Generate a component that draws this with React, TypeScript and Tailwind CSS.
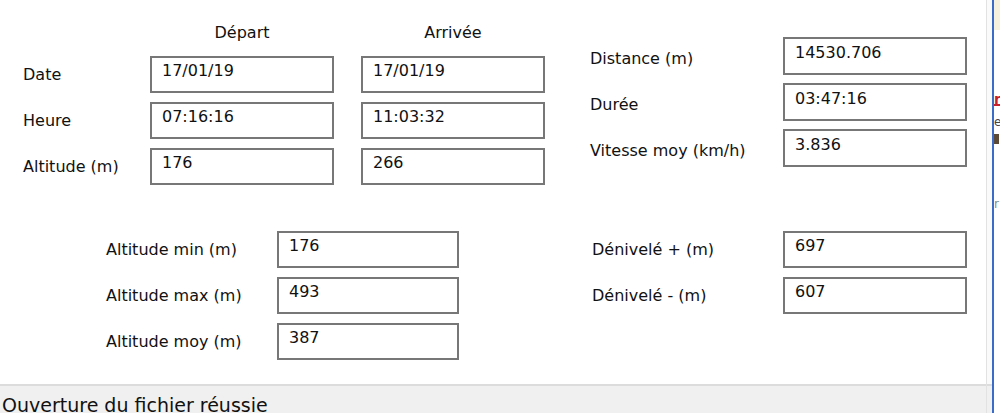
const font = { fontFamily: '"DejaVu Sans", Tahoma, Verdana, sans-serif' };

function Field({ value, w = "w-[184px]", h = "h-[37px]" }: { value: string; w?: string; h?: string }) {
  return (
    <div
      className={`${w} ${h} shrink-0 border-2 border-[#777] bg-white flex items-center pl-[10px] pb-[7px] text-[16px] text-[#111]`}
    >
      {value}
    </div>
  );
}

export default function App() {
  const rows = [
    { label: "Date", dep: "17/01/19", arr: "17/01/19" },
    { label: "Heure", dep: "07:16:16", arr: "11:03:32" },
    { label: "Altitude (m)", dep: "176", arr: "266" },
  ];
  const stats = [
    { label: "Distance (m)", value: "14530.706" },
    { label: "Durée", value: "03:47:16" },
    { label: "Vitesse moy (km/h)", value: "3.836" },
  ];
  const alts = [
    { label: "Altitude min (m)", value: "176" },
    { label: "Altitude max (m)", value: "493" },
    { label: "Altitude moy (m)", value: "387" },
  ];
  const deniv = [
    { label: "Dénivelé + (m)", value: "697" },
    { label: "Dénivelé - (m)", value: "607" },
  ];

  return (
    <div className="w-[1000px] h-[413px] flex overflow-hidden bg-white text-[#111]" style={font}>
      {/* main window */}
      <div className="w-[986px] h-full flex flex-col">
        <div className="flex-1 flex flex-col">
          {/* top section */}
          <div className="flex">
            <div className="w-[590px] pl-[23px] pt-[20px]">
              <div className="flex h-[26px] items-center text-[16px]">
                <div className="w-[127px]" />
                <div className="w-[184px] text-center">Départ</div>
                <div className="w-[27px]" />
                <div className="w-[184px] text-center">Arrivée</div>
              </div>
              <div className="mt-[10px] flex flex-col gap-[9px]">
                {rows.map((r) => (
                  <div key={r.label} className="flex items-center">
                    <div className="w-[127px] text-[16px]">{r.label}</div>
                    <Field value={r.dep} />
                    <div className="w-[27px]" />
                    <Field value={r.arr} />
                  </div>
                ))}
              </div>
            </div>
            <div className="pt-[37px] flex flex-col gap-[8px]">
              {stats.map((s) => (
                <div key={s.label} className="flex items-center">
                  <div className="w-[193px] text-[16px] pt-[6px]">{s.label}</div>
                  <Field value={s.value} h="h-[38px]" />
                </div>
              ))}
            </div>
          </div>

          {/* bottom section */}
          <div className="flex mt-[46px]">
            <div className="w-[592px] pl-[106px] flex flex-col gap-[9px]">
              {alts.map((a) => (
                <div key={a.label} className="flex items-center">
                  <div className="w-[171px] text-[16px]">{a.label}</div>
                  <Field value={a.value} w="w-[182px]" />
                </div>
              ))}
            </div>
            <div className="flex flex-col gap-[9px]">
              {deniv.map((d) => (
                <div key={d.label} className="flex items-center">
                  <div className="w-[191px] text-[16px]">{d.label}</div>
                  <Field value={d.value} />
                </div>
              ))}
            </div>
          </div>
        </div>

        {/* status bar */}
        <div className="h-[29px] border-t-2 border-[#dcdcdc] bg-[#f0f0f0] pl-[2px] pt-[8px] text-[19px] leading-[22px] text-[#111] whitespace-nowrap overflow-hidden">
          Ouverture du fichier réussie
        </div>
      </div>

      {/* window frame edge */}
      <div className="w-[6px] h-full flex flex-col border-l border-[#e2e2e2]">
        <div className="flex-1 bg-[#fafafa]" />
        <div className="h-[29px] bg-[#f0f0f0] border-t-2 border-[#dcdcdc]" />
      </div>
      <div className="w-[2px] h-full bg-[#3b6cc8]" />

      {/* neighbouring window sliver */}
      <div className="flex-1 h-full flex flex-col overflow-hidden bg-white">
        <div className="h-[30px] bg-[#f6f1dc]" />
        <div className="mt-[62px] h-[14px] text-[14px] leading-[14px] font-bold text-[#c8202a] border-b-2 border-[#c8202a]">r</div>
        <div className="mt-[10px] text-[12px] leading-[12px] text-[#444]">e</div>
        <div className="mt-[6px] h-[10px] w-[5px] bg-[#5a4a36]" />
        <div className="mt-[54px] text-[12px] leading-[12px] text-[#7a9090]">r</div>
        <div className="flex-1" />
      </div>
    </div>
  );
}
